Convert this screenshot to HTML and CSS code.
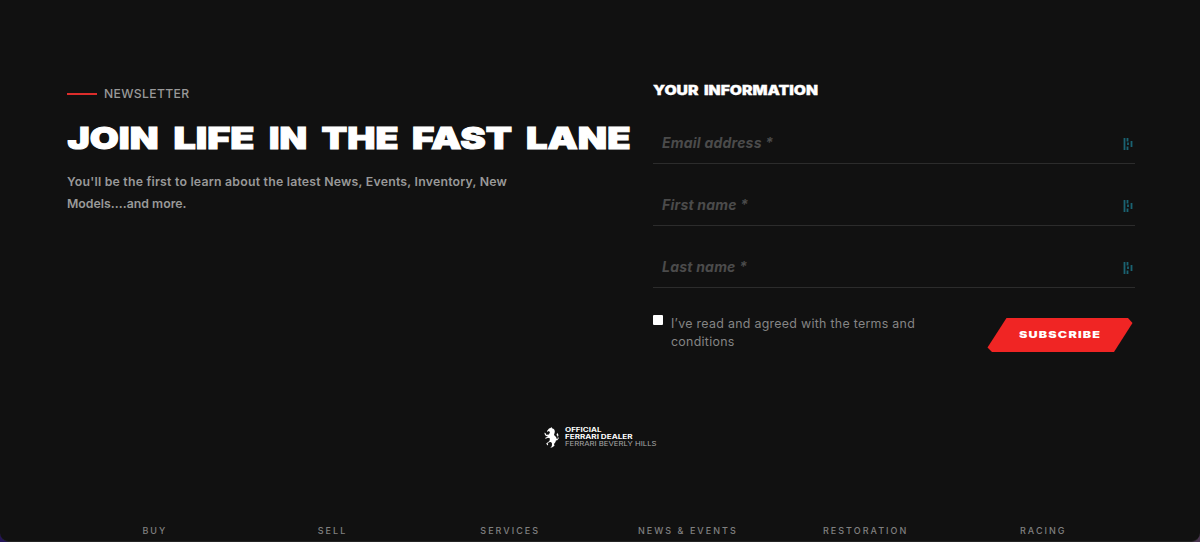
FILE: index.html
```html
<!DOCTYPE html>
<html lang="en">
<head>
<meta charset="utf-8">
<title>Newsletter</title>
<link rel="stylesheet" href="styles.css">
</head>
<body>
<div class="page">
  <main class="newsletter">
    <section class="intro">
      <div class="eyebrow"><span class="dash"></span><span>NEWSLETTER</span></div>
      <h1 class="title">
        <svg class="wide" width="570" height="44" viewBox="0 -8 570 44" font-size="30" stroke-width="1">
          <text x="1.500" y="25" textLength="91" lengthAdjust="spacingAndGlyphs">JOIN</text>
          <text x="107.500" y="25" textLength="81" lengthAdjust="spacingAndGlyphs">LIFE</text>
          <text x="203" y="25" textLength="38" lengthAdjust="spacingAndGlyphs">IN</text>
          <text x="255.500" y="25" textLength="77" lengthAdjust="spacingAndGlyphs">THE</text>
          <text x="346" y="25" textLength="100" lengthAdjust="spacingAndGlyphs">FAST</text>
          <text x="460" y="25" textLength="104.500" lengthAdjust="spacingAndGlyphs">LANE</text>
        </svg>
      </h1>
      <p class="lead">You'll be the first to learn about the latest News, Events, Inventory, New<br><span class="lead-end">Models....and more.</span></p>
    </section>
    <form class="form">
      <h2 class="form-title">
        <svg class="wide" width="170" height="22" viewBox="0 -4 170 22" font-size="12.800" stroke-width=".3">
          <text x="0" y="12" textLength="45.500" lengthAdjust="spacingAndGlyphs">YOUR</text>
          <text x="51" y="12" textLength="114" lengthAdjust="spacingAndGlyphs">INFORMATION</text>
        </svg>
      </h2>
      <div class="field"><span class="ph">Email address *</span><svg class="mark" width="10" height="12" viewBox="0 0 10 12"><path d="M1.500 0v12M4.500 0v3.500M4.500 8.500v3.500M5 4.500v2.500M8.500 3v6"/></svg></div>
      <div class="field"><span class="ph">First name *</span><svg class="mark" width="10" height="12" viewBox="0 0 10 12"><path d="M1.500 0v12M4.500 0v3.500M4.500 8.500v3.500M5 4.500v2.500M8.500 3v6"/></svg></div>
      <div class="field"><span class="ph">Last name *</span><svg class="mark" width="10" height="12" viewBox="0 0 10 12"><path d="M1.500 0v12M4.500 0v3.500M4.500 8.500v3.500M5 4.500v2.500M8.500 3v6"/></svg></div>
      <div class="actions">
        <span class="check"></span>
        <p class="terms">I’ve read and agreed with the terms and<br>conditions</p>
        <svg class="button" width="146" height="34" viewBox="0 0 146 34">
          <path d="M19.500 0H141l4.500 5L127 34H5L.500 29.500Z" fill="#f02524"/>
          <text transform="translate(32 20.300) scale(1.4 1)" font-size="9" letter-spacing=".35" textLength="58.200">SUBSCRIBE</text>
        </svg>
      </div>
    </form>
  </main>
  <div class="dealer">
    <svg width="15" height="21" viewBox="0 0 15 21" fill="#fff"><path d="M5 1.500 6.500 1 7.500 0 8 1.200C10 1.700 11 3 10.800 5L10 8l2 2 .800 2 1.200-.800-.500-2.200-1-1 .700-2.200L14.500 8l-.500 1.500.700 2-1.700 2-1-.200-.500 1.700L10 17l.500 1.800L8 20.500H6.300l1.500-1.300.200-2.700-1-1.500-2 .300-1.300 1 .500 1.500-.700.700-1.300-2L5.500 14 6 11.500 4 10.700l-2.300 1L1 11l3-1.500-2-.500L1 8 .300 5.700 1.500 6l.700 1.800 2.800-.300L6 5 4.500 4 3.500 5 3 4Z"/></svg>
    <svg class="dealer-text" width="94" height="24" viewBox="0 -2 94 24">
      <text x="0" y="6.300" font-weight="700" textLength="36.500" lengthAdjust="spacingAndGlyphs">OFFICIAL</text>
      <text x="0" y="13.200" font-weight="700" textLength="67.500" lengthAdjust="spacingAndGlyphs">FERRARI DEALER</text>
      <text x="0" y="20" font-weight="400" fill="#aaa" textLength="91.500" lengthAdjust="spacingAndGlyphs">FERRARI BEVERLY HILLS</text>
    </svg>
  </div>
  <nav class="nav"><a>BUY</a><a>SELL</a><a>SERVICES</a><a>NEWS &amp; EVENTS</a><a>RESTORATION</a><a>RACING</a></nav>
</div>
</body>
</html>
```
FILE: styles.css
```css
* { box-sizing: border-box; }
html { background: #39304a; }
body { margin: 0; width: 1200px; height: 542px; overflow: hidden; font-family: Inter, sans-serif; background: linear-gradient(90deg, #241458, #49364f); }
.page { height: 542px; background: #111; border-bottom: 1px solid #242424; border-radius: 0 0 9px 9px; padding: 83px 65px 0 66px; }
svg { display: block; overflow: visible; }
h1, h2, p { margin: 0; }
.newsletter { display: grid; grid-template-columns: 587px 482px; height: 343px; }
.wide { font-weight: 900; fill: #fff; stroke: #fff; }
.eyebrow { display: flex; align-items: center; gap: 7px; height: 21px; padding-left: 1px; font-size: 12.2px; font-weight: 500; letter-spacing: .35px; color: #999; }
.dash { width: 30px; height: 2px; background: #dc2d2b; }
.title { margin-top: 12px; }
.lead { margin-top: 11px; padding-left: 1px; font-size: 12.3px; line-height: 21.5px; font-weight: 600; letter-spacing: .22px; color: #999; white-space: nowrap; }
.lead-end { letter-spacing: .02px; }
.form-title { height: 36px; margin-top: -4px; margin-bottom: 4px; }
.field { display: flex; align-items: center; justify-content: space-between; height: 62px; padding: 20px 2px 0 9px; border-bottom: 1px solid #2c2c2c; }
.form-title + .field { height: 45px; padding-top: 3px; }
.ph { font-size: 14px; font-weight: 700; font-style: italic; letter-spacing: .22px; color: #4b4b4b; }
.mark { margin-top: 3px; fill: none; stroke: #1a6372; stroke-width: 1.8; }
.actions { display: flex; padding-top: 26px; }
.check { width: 10px; height: 10px; background: #fff; border-radius: 1px; margin-top: 1px; }
.terms { margin-top: 1px; margin-left: 8px; width: 316px; font-size: 12.4px; line-height: 18px; letter-spacing: .29px; color: #858585; }
.button { margin-top: 4px; }
.button text { font-weight: 900; fill: #fff; }
.dealer { display: flex; gap: 6px; justify-content: center; height: 90px; padding-left: 1px; }
.dealer svg:first-child { margin-top: 1px; }
.dealer-text { margin-top: -2px; font-size: 6.3px; fill: #fff; }
.nav { display: grid; grid-template-columns: repeat(6, 177.7px); font-size: 9px; line-height: 30px; font-weight: 500; letter-spacing: 2.03px; color: #808080; text-align: center; }
```
